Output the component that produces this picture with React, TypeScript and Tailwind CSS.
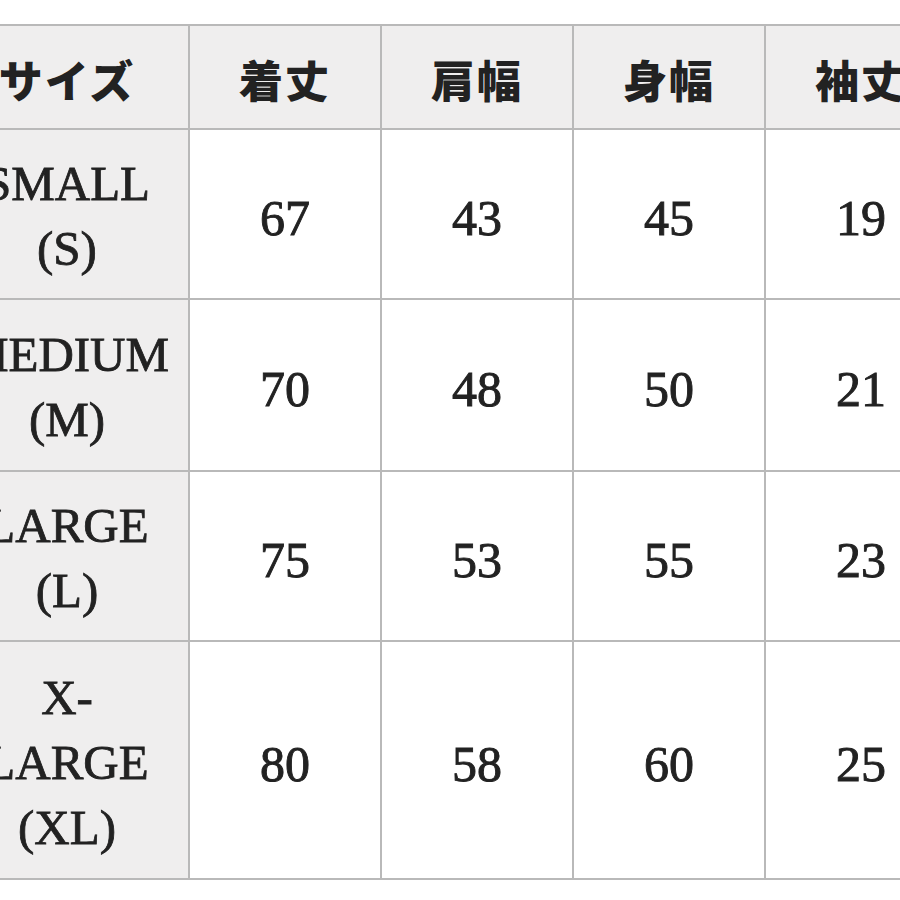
const headers = ["サイズ", "着丈", "肩幅", "身幅", "袖丈"];

const rows: { label: string[]; values: string[]; h: string }[] = [
  { label: ["SMALL", "(S)"], values: ["67", "43", "45", "19"], h: "h-[170px]" },
  { label: ["MEDIUM", "(M)"], values: ["70", "48", "50", "21"], h: "h-[172px]" },
  { label: ["LARGE", "(L)"], values: ["75", "53", "55", "23"], h: "h-[170px]" },
  { label: ["X-", "LARGE", "(XL)"], values: ["80", "58", "60", "25"], h: "h-[238px]" },
];

const serif = "font-['Liberation_Serif','DejaVu_Serif',serif]";

export default function App() {
  return (
    <div className="h-[900px] w-[900px] overflow-hidden bg-white pt-[24px]">
      <table className="ml-[-56px] w-[1012px] table-fixed border-collapse text-[#222]">
        <colgroup>
          <col className="w-[244px]" />
          <col className="w-[192px]" />
          <col className="w-[192px]" />
          <col className="w-[192px]" />
          <col className="w-[192px]" />
        </colgroup>
        <thead>
          <tr className="h-[104px] bg-[#efeeee]">
            {headers.map((h) => (
              <th
                key={h}
                className="border-2 border-[#b9b9b9] p-0 pt-[4px] text-center align-middle font-['Noto_Sans_CJK_JP',sans-serif] text-[44px] font-black leading-none tracking-[2px]"
              >
                {h}
              </th>
            ))}
          </tr>
        </thead>
        <tbody>
          {rows.map((r) => (
            <tr key={r.label.join("")} className={r.h}>
              <td
                className={`border-2 border-[#b9b9b9] bg-[#efeeee] px-0 pt-[4px] text-center align-middle ${serif} text-[49px] leading-[65px] [-webkit-text-stroke:0.8px_#222]`}
              >
                {r.label.map((l) => (
                  <div key={l}>{l}</div>
                ))}
              </td>
              {r.values.map((v, i) => (
                <td
                  key={i}
                  className={`border-2 border-[#b9b9b9] bg-white p-0 pt-[8px] text-center align-middle ${serif} text-[50px] leading-none [-webkit-text-stroke:0.9px_#222]`}
                >
                  {v}
                </td>
              ))}
            </tr>
          ))}
        </tbody>
      </table>
    </div>
  );
}
